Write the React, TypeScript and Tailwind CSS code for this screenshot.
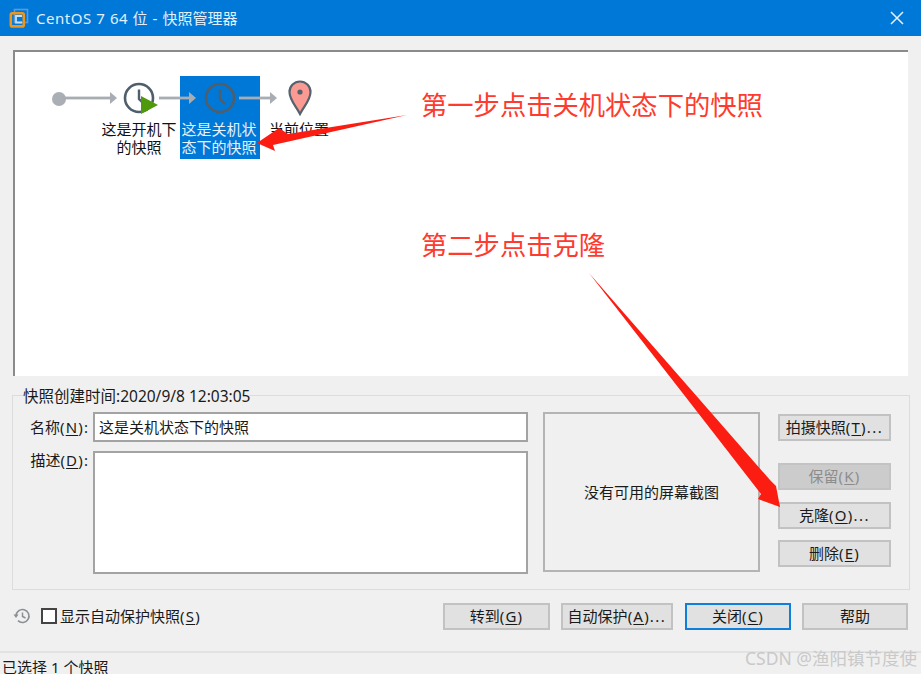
import React from "react";

const font = { fontFamily: '"Noto Sans", "Noto Sans CJK SC", sans-serif' };

function Btn({ children, w, disabled, primary }: { children: React.ReactNode; w: string; disabled?: boolean; primary?: boolean }) {
  return (
    <div
      className={`${w} flex h-[27px] items-center justify-center text-[15px] leading-none whitespace-nowrap border-2 ${
        primary
          ? "border-[#0f7fdb] bg-[#e1e1e1] text-[#1a1a1a]"
          : disabled
          ? "border-[#c4c4c4] bg-[#cccccc] text-[#8c8c8c]"
          : "border-[#c2c2c2] bg-[#e1e1e1] text-[#1a1a1a]"
      }`}
    >
      {children}
    </div>
  );
}

function Mn({ c }: { c: string }) {
  return (
    <span className="tracking-[1.2px]">
      (<span className="underline underline-offset-2">{c}</span>)
    </span>
  );
}

function Dots() {
  return <span className="tracking-[1.5px]">...</span>;
}

function Clock({ c = "#4f5e6b" }: { c?: string }) {
  return (
    <svg width="34" height="34" viewBox="0 0 34 34" fill="none">
      <circle cx="17" cy="17" r="14" stroke={c} strokeWidth="2.6" />
      <path d="M17 8.500V18l5 5" stroke={c} strokeWidth="2.400" />
    </svg>
  );
}

function Arrow({ w }: { w: number }) {
  return (
    <svg width={w} height="14" viewBox={`0 0 ${w} 14`}>
      <rect x="0" y="5.6" width={w - 5} height="2.8" fill="#a7adb2" />
      <path d={`M${w - 7} 1L${w} 7L${w - 7} 13Z`} fill="#a7adb2" />
    </svg>
  );
}

export default function App() {
  return (
    <div style={font} className="relative flex h-[674px] w-[921px] flex-col overflow-hidden bg-[#f0f0f0] text-[#1a1a1a]">
      {/* title bar */}
      <div className="flex h-[36px] shrink-0 items-center bg-[#0078d7] pl-[9px] pr-[17px] text-white">
        <svg width="20" height="20" viewBox="0 0 20 20" fill="none">
          <rect x="5.500" y="1.500" width="13" height="13" stroke="#5a9bd8" strokeWidth="1.600" />
          <rect x="1.800" y="5.200" width="13" height="13.200" rx="1.500" stroke="#f0941a" strokeWidth="2.600" />
          <path d="M13 8H7v6.500h6" stroke="#bfe0f7" strokeWidth="1.800" />
        </svg>
        <span className="ml-[7px] text-[15px] text-[#e3f0fb]">
          <span className="tracking-[0.55px]">CentOS 7 64 位 - </span>快照管理器
        </span>
        <svg className="ml-auto" width="14" height="14" viewBox="0 0 14 14">
          <path d="M1 1L13 13M13 1L1 13" stroke="#e8f2fb" strokeWidth="1.500" />
        </svg>
      </div>

      {/* snapshot tree */}
      <div className="relative ml-[13px] mt-[14px] h-[326px] w-[895px] shrink-0 border-l-2 border-t-2 border-[#8b8b8b] bg-white">
        <div className="absolute left-[37px] top-[40px] h-[14px] w-[14px] rounded-full bg-[#a9afb5]" />
        <div className="absolute left-[47px] top-[39px]"><Arrow w={55} /></div>

        <div className="absolute left-[107px] top-[29px]"><Clock /></div>
        <svg className="absolute left-[125px] top-[43px]" width="19" height="20" viewBox="0 0 19 20">
          <path d="M1 1L18 10L1 19Z" fill="#4e9a0c" />
        </svg>
        <div className="absolute left-[86px] top-[68px] w-[76px] text-center text-[15px] leading-[18px] text-[#111]">
          这是开机下
          <br />
          的快照
        </div>

        <div className="absolute left-[165px] top-[24px] h-[83px] w-[80px] bg-[#0078d7]" />
        <div className="absolute left-[144px] top-[39px]"><Arrow w={37} /></div>
        <div className="absolute left-[188px] top-[29px]"><Clock /></div>
        <div className="absolute left-[164px] top-[68px] w-[80px] text-center text-[15px] leading-[18px] text-[#e6f2fc]">
          这是关机状
          <br />
          态下的快照
        </div>

        <div className="absolute left-[224px] top-[39px]"><Arrow w={38} /></div>
        <svg className="absolute left-[273px] top-[28px]" width="24" height="36" viewBox="0 0 24 36">
          <path d="M12 34C8 26 1.500 20 1.500 12a10.500 10.500 0 0 1 21 0C22.500 20 16 26 12 34Z" fill="#fb9a92" stroke="#55626d" strokeWidth="2.200" />
          <circle cx="12" cy="12" r="2.600" fill="#55626d" />
        </svg>
        <div className="absolute left-[244px] top-[68px] w-[80px] text-center text-[15px] leading-[18px] text-[#111]">当前位置</div>
      </div>

      {/* detail group */}
      <div className="relative ml-[12px] mt-[19px] h-[195px] w-[898px] shrink-0 border border-[#dcdcdc]">
        <div className="absolute -top-[10px] left-[10px] bg-[#f0f0f0] text-[15.5px] leading-[20px] whitespace-nowrap">快照创建时间:2020/9/8 12:03:05</div>
        <div className="flex pl-[16px] pt-[17px]">
          <div className="flex w-[514px] shrink-0 flex-col">
            <div className="-mt-px flex h-[30px] items-center">
              <div className="w-[64px] shrink-0 pr-[5px] text-right text-[15px] leading-none whitespace-nowrap">
                名称<Mn c="N" />:
              </div>
              <div className="flex h-[30px] w-[435px] items-center border-2 border-[#a3a3a3] bg-white pl-[4px] text-[15px]">这是关机状态下的快照</div>
            </div>
            <div className="mt-[9px] flex">
              <div className="w-[64px] shrink-0 pr-[5px] text-right text-[15px] leading-[18px] whitespace-nowrap">
                描述<Mn c="D" />:
              </div>
              <div className="h-[123px] w-[435px] border-2 border-[#a3a3a3] bg-white" />
            </div>
          </div>
          <div className="-mt-px flex h-[160px] w-[217px] shrink-0 items-center justify-center border-2 border-[#b4b4b4] text-[15px]">
            没有可用的屏幕截图
          </div>
          <div className="ml-[18px] flex flex-col pt-px">
            <Btn w="w-[113px]">拍摄快照<Mn c="T" /><Dots /></Btn>
            <div className="mt-[22px]"><Btn w="w-[113px]" disabled>保留<Mn c="K" /></Btn></div>
            <div className="mt-[12px]"><Btn w="w-[113px]">克隆<Mn c="O" /><Dots /></Btn></div>
            <div className="mt-[11px]"><Btn w="w-[113px]">删除<Mn c="E" /></Btn></div>
          </div>
        </div>
      </div>

      {/* action row */}
      <div className="ml-[13px] mt-[12px] flex h-[28px] shrink-0 items-center">
        <svg width="18" height="18" viewBox="0 0 18 18" fill="none">
          <path d="M3 9a6.500 6.500 0 1 1 2 4.700" stroke="#8a8f94" strokeWidth="1.600" />
          <path d="M0.500 7.500h5L3 11Z" fill="#8a8f94" />
          <path d="M9.500 5.500V9.500L12.500 11" stroke="#8a8f94" strokeWidth="1.500" />
        </svg>
        <div className="ml-[10px] h-[16px] w-[16px] border-2 border-[#444] bg-white" />
        <div className="ml-[3px] text-[15px] whitespace-nowrap">显示自动保护快照<Mn c="S" /></div>
        <div className="ml-auto mr-[13px] flex">
          <Btn w="w-[107px]">转到<Mn c="G" /></Btn>
          <div className="ml-[11px]"><Btn w="w-[112px]">自动保护<Mn c="A" /><Dots /></Btn></div>
          <div className="ml-[12px]"><Btn w="w-[106px]" primary>关闭<Mn c="C" /></Btn></div>
          <div className="ml-[11px]"><Btn w="w-[106px]">帮助</Btn></div>
        </div>
      </div>
      <div className="mt-[21px] h-[2px] w-full shrink-0 bg-[#e2e2e2]" />
      <div className="mt-[4px] whitespace-nowrap pl-[2px] text-[15px] leading-[20px]">已选择 1 个快照</div>

      {/* annotations */}
      <div className="absolute left-[421px] top-[87px] text-[26.300px] leading-[36px] whitespace-nowrap text-[#ff3a2e]">第一步点击关机状态下的快照</div>
      <div className="absolute left-[421px] top-[227px] text-[26.300px] leading-[36px] whitespace-nowrap text-[#ff3a2e]">第二步点击克隆</div>
      <svg className="absolute left-0 top-0" width="921" height="674" viewBox="0 0 921 674">
        <path d="M407 115L288 134L279 128L257 143L275 151L273 145Z" fill="#fb1c12" />
        <path d="M589 273L700 400L770 480L776 486L780 507L758 499L761 494L688 400Z" fill="#fb1c12" />
      </svg>
      <div className="absolute left-[745px] top-[648px] text-[17.500px] leading-[20px] whitespace-nowrap text-[#c9c9c9]">CSDN @渔阳镇节度使</div>
    </div>
  );
}
